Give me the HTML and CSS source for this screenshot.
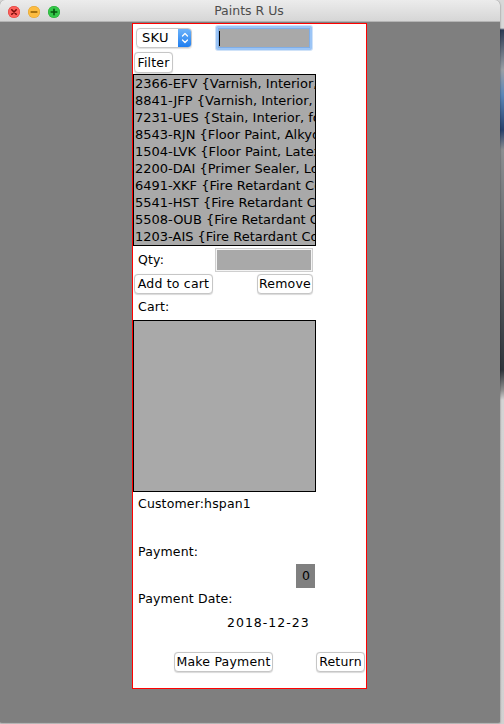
FILE: index.html
```html
<!DOCTYPE html>
<html lang="en">
<head>
<meta charset="utf-8">
<title>Paints R Us</title>
<link rel="stylesheet" href="styles.css">
</head>
<body>
<div class="window">
  <div class="titlebar">
    <div class="lights">
      <span class="light light-close"><svg width="12" height="12" viewBox="0 0 12 12"><path d="M3.8 3.8 L8.2 8.2 M8.2 3.8 L3.8 8.2" stroke="#7a0d0a" stroke-width="1.6" stroke-linecap="round"/></svg></span>
      <span class="light light-min"><svg width="12" height="12" viewBox="0 0 12 12"><path d="M3.2 6 H8.8" stroke="#8a5a00" stroke-width="1.6" stroke-linecap="round"/></svg></span>
      <span class="light light-max"><svg width="12" height="12" viewBox="0 0 12 12"><path d="M3.2 6 H8.8 M6 3.2 V8.8" stroke="#06530f" stroke-width="1.6" stroke-linecap="round"/></svg></span>
    </div>
    <div class="title">Paints R Us</div>
  </div>
  <div class="content">
    <div class="panel">
      <div class="row row-search">
        <div class="select">
          <span class="select-label">SKU</span>
          <span class="stepper"><svg width="12" height="20" viewBox="0 0 12 20"><path d="M3.5 8 L6 5.5 L8.5 8 M3.5 12 L6 14.5 L8.5 12" fill="none" stroke="#fff" stroke-width="1.3" stroke-linecap="round" stroke-linejoin="round"/></svg></span>
        </div>
        <div class="field field-focus"><span class="caret"></span></div>
      </div>
      <div class="row row-filter"><button class="btn btn-filter">Filter</button></div>
      <ul class="list sku-list">
        <li>2366-EFV {Varnish, Interior, Satin}</li>
        <li>8841-JFP {Varnish, Interior, Gloss}</li>
        <li>7231-UES {Stain, Interior, for Wood}</li>
        <li>8543-RJN {Floor Paint, Alkyd}</li>
        <li>1504-LVK {Floor Paint, Latex}</li>
        <li>2200-DAI {Primer Sealer, Low VOC}</li>
        <li>6491-XKF {Fire Retardant Coating}</li>
        <li>5541-HST {Fire Retardant Coating}</li>
        <li>5508-OUB {Fire Retardant Coating}</li>
        <li>1203-AIS {Fire Retardant Coating}</li>
      </ul>
      <div class="row row-qty">
        <span class="label label-qty">Qty:</span>
        <div class="field field-qty"></div>
      </div>
      <div class="row row-cart-btns">
        <button class="btn btn-add">Add to cart</button>
        <button class="btn btn-remove">Remove</button>
      </div>
      <div class="label label-cart">Cart:</div>
      <div class="list cart-list"></div>
      <div class="label label-customer">Customer:hspan1</div>
      <div class="label label-payment">Payment:</div>
      <div class="amount">0</div>
      <div class="label label-date">Payment Date:</div>
      <div class="date">2018-12-23</div>
      <div class="row row-actions">
        <button class="btn btn-pay">Make Payment</button>
        <button class="btn btn-return">Return</button>
      </div>
    </div>
  </div>
</div>
</body>
</html>
```

FILE: styles.css
```css
* { box-sizing: border-box; }

html, body {
  margin: 0;
  padding: 0;
}

body {
  width: 504px;
  height: 724px;
  overflow: hidden;
  font-family: "DejaVu Sans", "Liberation Sans", sans-serif;
  font-size: 12.5px;
  color: #000;
  background: linear-gradient(to bottom, #d8d8d8 0px, #d8d8d8 28px, #2c3a55 30px, #9aa0a6 70px, #5a86b8 95px, #28406c 130px, #8c8f92 150px, #30353c 370px, #8f8f8f 390px, #d4d4d4 400px, #d0d0d0 900px);
}

.window {
  width: 500px;
  height: 722px;
  background: #7f7f7f;
  border-radius: 5px 5px 0 0;
  overflow: hidden;
  box-shadow: 0 1px 2px rgba(0,0,0,0.5);
}

.titlebar {
  height: 22px;
  position: relative;
  display: flex;
  align-items: center;
  justify-content: center;
  background: linear-gradient(to bottom, #ececec, #d6d6d6);
  border-bottom: 1px solid #b4b4b4;
}

.lights {
  position: absolute;
  left: 8px;
  top: 6px;
  display: flex;
  gap: 8px;
}

.light {
  width: 12px;
  height: 12px;
  border-radius: 50%;
  display: block;
}
.light svg { display: block; }
.light-close { background: #fc605b; box-shadow: inset 0 0 0 0.5px #de3f39; }
.light-min { background: #fdbc40; box-shadow: inset 0 0 0 0.5px #dea236; }
.light-max { background: #34c84a; box-shadow: inset 0 0 0 0.5px #27aa35; }

.title {
  font-size: 12.5px;
  color: #4d4d4d;
  margin-left: -2px;
}

.content {
  padding-top: 1px;
}

.panel {
  margin-left: 132px;
  width: 235px;
  height: 666px;
  background: #fff;
  border: 1px solid #ff0000;
}

.row {
  display: flex;
  align-items: flex-start;
}

/* search row */
.row-search { height: 26px; }

.select {
  margin-top: 4px;
  margin-left: 3px;
  width: 56px;
  height: 20px;
  display: flex;
  border: 1px solid #c8c8c8;
  border-radius: 4px;
  overflow: hidden;
  box-shadow: 0 0.5px 1px rgba(0,0,0,0.12);
}
.select-label {
  flex: 1;
  line-height: 18px;
  padding-left: 5px;
  font-size: 13px;
  letter-spacing: 0.3px;
}
.stepper {
  width: 13px;
  height: 18px;
  background: linear-gradient(to bottom, #6cb3fa, #1f7ef0);
  display: flex;
  align-items: center;
  justify-content: center;
}
.stepper svg { display: block; }

.field {
  background: #a9a9a9;
}
.field-focus {
  margin-left: 24px;
  margin-top: 2px;
  width: 96px;
  height: 24px;
  border: 2px solid #9cc5f6;
  box-shadow: 0 0 0 1px #cfe2f8, inset 0 0 0 1px #7faee8;
  border-radius: 2px;
  position: relative;
}
.caret {
  position: absolute;
  left: 1px;
  top: 3px;
  width: 1px;
  height: 15px;
  background: #000;
}

.row-filter { margin-top: 2px; }

.btn {
  font-family: inherit;
  font-size: 12.5px;
  color: #000;
  background: #fff;
  border: 1px solid #c6c6c6;
  border-radius: 4px;
  box-shadow: 0 0.5px 1px rgba(0,0,0,0.15);
  padding: 0;
  height: 20px;
  line-height: 18px;
  text-align: center;
  white-space: nowrap;
  letter-spacing: 0.2px;
}

.btn-filter {
  margin-left: 1px;
  width: 39px;
  height: 21px;
}

.list {
  margin: 0;
  padding: 0;
  list-style: none;
  width: 183px;
  height: 172px;
  background: #a9a9a9;
  border: 1px solid #000;
  overflow: hidden;
}
.sku-list { margin-top: 1px; }
.sku-list li {
  height: 17px;
  line-height: 17px;
  padding-left: 1px;
  white-space: nowrap;
  overflow: hidden;
  font-size: 13px;
  letter-spacing: 0;
}

.row-qty {
  margin-top: 2px;
  width: 180px;
  height: 24px;
  justify-content: space-between;
}
.label {
  white-space: nowrap;
  letter-spacing: 0.15px;
}
.label-qty {
  line-height: 24px;
  padding-left: 5px;
}
.field-qty {
  width: 98px;
  height: 24px;
  border: 1px solid #cfcfcf;
  box-shadow: inset 0 0 0 1px #f4f4f4;
}

.row-cart-btns {
  margin-top: 2px;
  width: 180px;
  justify-content: space-between;
}
.btn-add { margin-left: 1px; width: 79px; }
.btn-remove { width: 56px; }

.label-cart {
  height: 26px;
  line-height: 26px;
  padding-left: 5px;
}

.label-customer {
  line-height: 24px;
  padding-left: 5px;
}

.label-payment {
  margin-top: 24px;
  line-height: 24px;
  padding-left: 5px;
}

.amount {
  margin-left: 163px;
  width: 19px;
  height: 24px;
  line-height: 24px;
  text-align: center;
  background: #808080;
  padding-left: 1px;
}

.label-date {
  line-height: 22px;
  padding-left: 5px;
}

.date {
  line-height: 26px;
  padding-left: 94px;
  letter-spacing: 1px;
}

.row-actions {
  margin-top: 16px;
}
.btn-pay { margin-left: 41px; width: 99px; }
.btn-return { margin-left: 43px; width: 49px; }
```
